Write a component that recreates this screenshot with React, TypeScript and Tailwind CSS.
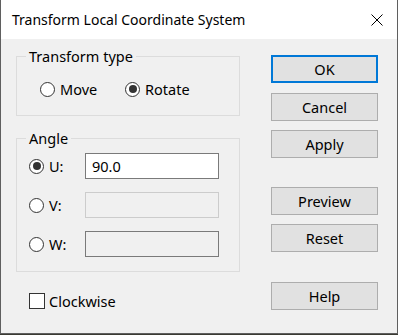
import React, { useState } from 'react';

const font = { fontFamily: '"Noto Sans", "Open Sans", sans-serif' };

const Radio: React.FC<{ checked: boolean }> = ({ checked }) => (
  <span className="flex h-[15px] w-[15px] shrink-0 items-center justify-center rounded-full border border-[#333333] bg-white">
    {checked && <span className="h-[8px] w-[8px] rounded-full bg-[#333333]" />}
  </span>
);

const Button: React.FC<{ label: string; primary?: boolean; className?: string }> = ({ label, primary, className }) => (
  <button
    type="button"
    className={`flex h-[28px] w-[107px] items-center justify-center bg-[#e1e1e1] text-[14.5px] leading-[18px] text-black ${
      primary ? 'border-2 border-[#0078d7]' : 'border border-[#adadad]'
    } ${className ?? ''}`}
  >
    {label}
  </button>
);

export default function App() {
  const [mode, setMode] = useState<'move' | 'rotate'>('rotate');
  const [axis, setAxis] = useState<'u' | 'v' | 'w'>('u');
  const [clockwise, setClockwise] = useState(false);

  return (
    <div className="h-[335px] w-[398px] bg-[#3a3a32]" style={font}>
      <div className="flex h-[334px] w-[398px] flex-col border-x border-b border-[#5f5f5f] bg-[#f0f0f0]">
        {/* title bar */}
        <div className="flex h-[39px] shrink-0 items-center justify-between bg-white pl-[11px] pr-[14px]">
          <span className="pt-[1px] text-[14px] leading-[18px] text-black">Transform Local Coordinate System</span>
          <svg width="12" height="12" viewBox="0 0 12 12" className="shrink-0">
            <path d="M0.5 0.5 L11.5 11.5 M11.5 0.5 L0.5 11.5" stroke="#000" strokeWidth="1" />
          </svg>
        </div>

        <div className="flex flex-1 pl-[15px] text-[14.5px] leading-[18px] text-black">
          {/* left column */}
          <div className="flex w-[224px] flex-col pt-[8px]">
            <fieldset className="border border-[#dcdcdc] pb-[17px]">
              <legend className="ml-[9px] px-[3px]">Transform type</legend>
              <div className="mt-[15px] flex h-[18px] items-center pl-[23px]">
                <label className="flex w-[85px] cursor-default items-center gap-[5px]" onClick={() => setMode('move')}>
                  <Radio checked={mode === 'move'} />
                  <span>Move</span>
                </label>
                <label className="flex cursor-default items-center gap-[5px]" onClick={() => setMode('rotate')}>
                  <Radio checked={mode === 'rotate'} />
                  <span>Rotate</span>
                </label>
              </div>
            </fieldset>

            <fieldset className="mt-[13px] border border-[#dcdcdc] pb-[14px]">
              <legend className="ml-[9px] px-[3px]">Angle</legend>
              <div className="mt-[6px] flex flex-col gap-[13px] pl-[12px]">
                <div className="flex h-[26px] items-center">
                  <label className="flex w-[56px] cursor-default items-center gap-[5px]" onClick={() => setAxis('u')}>
                    <Radio checked={axis === 'u'} />
                    <span>U:</span>
                  </label>
                  <input
                    defaultValue="90.0"
                    className="h-[26px] w-[134px] border border-[#7a7a7a] bg-white pl-[6px] outline-none"
                  />
                </div>
                <div className="flex h-[26px] items-center">
                  <label className="flex w-[56px] cursor-default items-center gap-[5px]" onClick={() => setAxis('v')}>
                    <Radio checked={axis === 'v'} />
                    <span>V:</span>
                  </label>
                  <input disabled className="h-[26px] w-[134px] border border-[#cccccc] bg-[#f0f0f0] pl-[6px] outline-none" />
                </div>
                <div className="flex h-[26px] items-center">
                  <label className="flex w-[56px] cursor-default items-center gap-[5px]" onClick={() => setAxis('w')}>
                    <Radio checked={axis === 'w'} />
                    <span>W:</span>
                  </label>
                  <input readOnly className="h-[26px] w-[134px] border border-[#7a7a7a] bg-[#f0f0f0] pl-[6px] outline-none" />
                </div>
              </div>
            </fieldset>

            <label className="mt-[20px] flex h-[18px] cursor-default items-center gap-[4px] pl-[13px]" onClick={() => setClockwise(!clockwise)}>
              <span className="flex h-[16px] w-[16px] items-center justify-center border border-[#333333] bg-white">
                {clockwise && (
                  <svg width="12" height="12" viewBox="0 0 12 12">
                    <path d="M2 6 L5 9 L10 3" stroke="#333" strokeWidth="1.5" fill="none" />
                  </svg>
                )}
              </span>
              <span>Clockwise</span>
            </label>
          </div>

          {/* right column */}
          <div className="ml-[31px] flex flex-col pt-[16px]">
            <Button label="OK" primary />
            <Button label="Cancel" className="mt-[10px]" />
            <Button label="Apply" className="mt-[9px]" />
            <Button label="Preview" className="mt-[29px]" />
            <Button label="Reset" className="mt-[9px]" />
            <Button label="Help" className="mt-[30px]" />
          </div>
        </div>
      </div>
    </div>
  );
}
